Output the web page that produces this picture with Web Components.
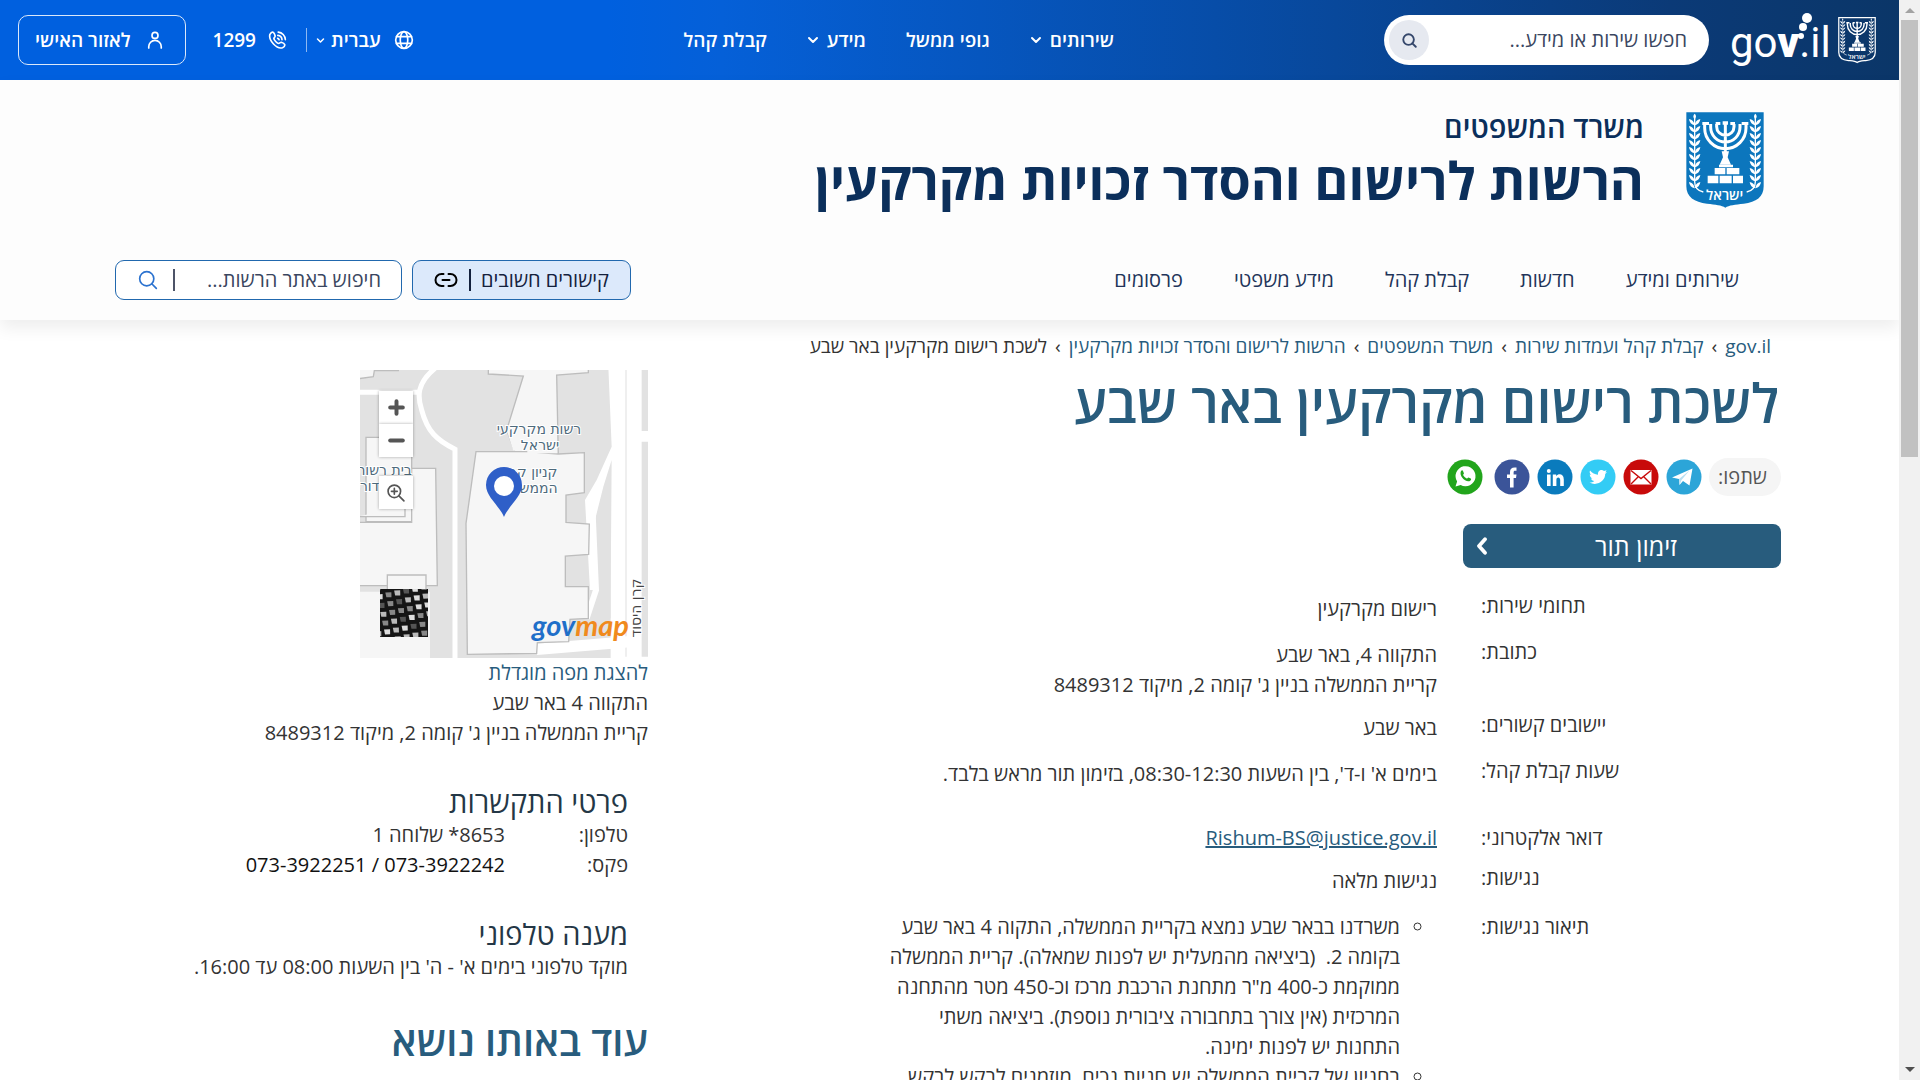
<!DOCTYPE html>
<html lang="he" dir="rtl">
<head>
<meta charset="utf-8">
<title>לשכת רישום מקרקעין באר שבע</title>
<style>
  :root {
    --font: "Open Sans", "Liberation Sans", sans-serif;
    --teal: #285c7d;
    --navy: #0b2f5b;
    --text: #333;
    --fs-body: 20px;
  }
  body { margin: 0; background: #fff; color: var(--text); font: 400 var(--fs-body)/30px var(--font); }
</style>
</head>
<body>
<gov-app></gov-app>

<script>
const base = `
  *, *::before, *::after { box-sizing: border-box; }
  :host { display: block; }
  a { color: inherit; text-decoration: none; }
  button, input { font: inherit; color: inherit; background: none; border: 0; padding: 0; margin: 0; outline: 0; }
  h1, h2, h3, p, ul, dl, dd, dt { margin: 0; padding: 0; font-weight: inherit; font-size: inherit; }
  svg { display: block; flex: none; }
`;
function define(name, css, html) {
  customElements.define(name, class extends HTMLElement {
    constructor() {
      super();
      this.attachShadow({ mode: 'open' }).innerHTML = `<style>${base}${css}</style>${html}`;
    }
  });
}

/* line icons, chosen by the name attribute */
const icons = {
  search: '<circle cx="10.500" cy="10.500" r="8.500"/><path d="M16.500 16.500l5.500 5.500"/>',
  user: '<circle cx="12" cy="6.500" r="3.600"/><path d="M4.500 21.500v-1.500a7.500 7.500 0 0 1 15 0v1.500"/>',
  globe: '<circle cx="12" cy="12" r="10"/><ellipse cx="12" cy="12" rx="4.500" ry="10"/><path d="M3 8h18M3 16h18"/>',
  phone: '<path d="M3.500 5.200C4.500 3.500 6 2.200 7.300 2.800c1 .5 2.200 3.200 2.500 4.400.2 1-1.500 2-1.600 3 0 1.600 4 6 5.800 6 1 0 2-1.700 3.100-1.500 1.200.3 3.800 1.800 4.100 2.800.4 1.300-1 3-2.600 3.700C12 23.500 1.500 12.500 3.500 5.200z"/><path d="M13 6.500a5.500 5.500 0 0 1 5 5M13.500 2.500a9.500 9.500 0 0 1 8.500 9M12.800 10a2.500 2.500 0 0 1 1.700 1.700"/>',
  chevron: '<path d="M4 8l8 8 8-8"/>',
  back: '<path d="M16 3l-8 9 8 9"/>',
  link: '<path d="M9.500 6H7.500a6 6 0 0 0 0 12h2M14.500 6h2a6 6 0 0 1 0 12h-2M8.500 12h7"/>',
  plus: '<path d="M12 4v16M4 12h16"/>',
  minus: '<path d="M4 12h16"/>',
  zoom: '<circle cx="10" cy="10" r="7.500"/><path d="M15.500 15.500l6 6M10 6.500v7M6.500 10h7"/>'
};
customElements.define('gov-icon', class extends HTMLElement {
  constructor() { super(); this.attachShadow({ mode: 'open' }); }
  connectedCallback() {
    this.shadowRoot.innerHTML = `<style>:host{display:block;flex:none;width:20px;height:20px}svg{display:block;width:100%;height:100%;fill:none;stroke:currentColor;stroke-linecap:round;stroke-linejoin:round}</style>
      <svg viewBox="0 0 24 24" stroke-width="${this.getAttribute('weight') || 2}" aria-hidden="true">${icons[this.getAttribute('name')]}</svg>`;
  }
});

/* state emblem: menorah between two olive branches */
const leaves = (x, s) => {
  let d = '';
  for (let y = 88; y < 290; y += 21) {
    d += `<path d="M${x} ${y + 18}q${-15 * s} -3 ${-17 * s} -19q${15 * s} 3 ${17 * s} 19zM${x} ${y + 18}q${15 * s} -3 ${17 * s} -19q${-15 * s} 3 ${-17 * s} 19z"/>`;
  }
  return d + `<path d="M${x} 88q-8 -9 0 -17q8 8 0 17z"/><path d="M${x} 85V275Q${x} 300 ${x + 26 * s} 306" fill="none" stroke="currentColor" stroke-width="4"/>`;
};
const menorah = `
  <g fill="none" stroke="currentColor" stroke-width="9">
    <path d="M973 102v12a62 62 0 0 0 124 0v-12M991 102v10a44 44 0 0 0 88 0v-10M1009 102v8a26 26 0 0 0 52 0v-8M1035 102v98"/>
  </g>
  <path d="M966 96h20v9h-20zM1006 96h14v9h-14zM1050 96h14v9h-14zM1084 96h20v9h-20zM1027 94h16v10h-16z"/>
  <path d="M1024 184h22l-4 18 10 22h-34l10-22z"/>
  <path d="M1016 224h42v8h-42zM1003 234h32v19h-32zM1039 234h38v19h-38zM982 257h32v23h-32zM1018 257h36v23h-36zM1058 257h30v23h-30z"/>`;
customElements.define('state-emblem', class extends HTMLElement {
  constructor() { super(); this.attachShadow({ mode: 'open' }); }
  connectedCallback() {
    const line = this.hasAttribute('outline');
    this.shadowRoot.innerHTML = `<style>:host{display:block;flex:none;width:78px;height:96px;color:#fff}:host([outline]){width:38px;height:48px}svg{display:block;width:100%;height:100%}text{font:600 42px "Open Sans",sans-serif}</style>
    <svg viewBox="${line ? '913 62 242 296' : '917 66 234 288'}" role="img" aria-label="סמל המדינה" fill="currentColor">
      <path d="M918 67h232v222c0 32-22 48-60 52-26 3-44 4-55 12-11-8-29-9-55-12-38-4-62-20-62-52z" ${line ? 'fill="none" stroke="currentColor" stroke-width="8"' : 'fill="#0c76bd"'}/>
      ${menorah}${leaves(943, 1)}${leaves(1125, -1)}
      <text x="1033" y="329" text-anchor="middle">ישראל</text>
    </svg>`;
  }
});

define('gov-logo', `
  a { display: flex; align-items: center; gap: 6px; color: #fff; }
  text { font: 400 42px Roboto, sans-serif; fill: #fff; }
`, `<a href="#" aria-label="gov.il">
  <state-emblem outline></state-emblem>
  <svg width="102" height="60" viewBox="0 0 102 60" direction="ltr">
    <text x="0" y="47">go<tspan font-weight="900">v</tspan>.il</text>
    <circle cx="71" cy="26" r="3" fill="#fff"/><circle cx="73" cy="17" r="4" fill="#fff"/><circle cx="77" cy="8" r="5" fill="#fff"/>
  </svg></a>`);

define('gov-header', `
  header { display: flex; justify-content: space-between; align-items: center; height: 80px; padding-inline: 23px 18px;
    color: #fff; font-weight: 600; font-size: 19px; background: linear-gradient(to left, #0b3668 0, #0b3a77 12%, #074da8 36%, #0560d8 62%, #0060df 68%); }
  .side, nav, form, .item { display: flex; align-items: center; }
  .start { gap: 21px; }
  form { width: 325px; height: 50px; background: #fff; border-radius: 25px; padding-inline: 22px 5px; color: #333; font-weight: 400; font-size: var(--fs-body); }
  input { flex: 1; min-width: 0; height: 30px; }
  input::placeholder { color: #3a4660; opacity: 1; }
  form button { width: 40px; height: 40px; border-radius: 50%; background: #e6e9f0; display: grid; place-items: center; color: #35476b; }
  form gov-icon { width: 15px; height: 15px; }
  nav { gap: 40px; }
  .item { gap: 8px; }
  .item gov-icon.chev { width: 12px; height: 12px; }
  .lang { gap: 13px; }
  .lang .item { gap: 6px; }
  .lang .item gov-icon.chev { width: 9px; height: 9px; }
  .bar { width: 1px; height: 24px; background: #8db8f2; margin-inline: 9px 19px; }
  .tel { gap: 11px; margin-inline-end: 27px; }
  .area { display: flex; align-items: center; gap: 14px; height: 50px; padding-inline: 20px 16px; border: 1px solid #dbe8fa; border-radius: 10px; }
`, `<header>
  <div class="side start"><gov-logo></gov-logo>
    <form><input type="search" aria-label="חיפוש" placeholder="חפשו שירות או מידע..."><button type="button" aria-label="חפש"><gov-icon name="search" weight="3"></gov-icon></button></form></div>
  <nav>
    <a class="item" href="#">שירותים<gov-icon class="chev" name="chevron" weight="4"></gov-icon></a>
    <a class="item" href="#">גופי ממשל</a>
    <a class="item" href="#">מידע<gov-icon class="chev" name="chevron" weight="4"></gov-icon></a>
    <a class="item" href="#">קבלת קהל</a>
  </nav>
  <div class="side">
    <button class="item lang" type="button"><gov-icon name="globe"></gov-icon><span class="item">עברית<gov-icon class="chev" name="chevron" weight="4"></gov-icon></span></button>
    <span class="bar"></span>
    <a class="item tel" href="#"><gov-icon name="phone"></gov-icon>1299</a>
    <button class="area" type="button"><gov-icon name="user"></gov-icon>לאזור האישי</button>
  </div></header>`);

define('office-header', `
  :host { position: relative; background: #fdfdfd; box-shadow: 0 8px 16px #00000012; }
  .brand { display: flex; gap: 42px; padding: 32px 135px 0; height: 156px; color: var(--navy); }
  h2 { font-size: 29px; line-height: 30px; font-weight: 600; }
  h1 { font-size: 52px; line-height: 76px; font-weight: 700; }
  .row { display: flex; align-items: flex-start; justify-content: space-between; height: 84px; padding: 24px 160px 0 115px; color: #223459; }
  nav, .tools, .box { display: flex; align-items: center; }
  nav { gap: 51px; height: 40px; }
  .tools { gap: 10px; }
  .box { height: 40px; border: 1px solid #2168ae; border-radius: 9px; }
  .links { width: 219px; padding-inline: 21px; justify-content: space-between; background: #dce9fb; color: #14213d; }
  .find { width: 287px; padding-inline: 20px 22px; background: #fff; }
  input { flex: 1; min-width: 0; height: 30px; }
  input::placeholder { color: #3a4660; opacity: 1; }
  i { width: 2px; height: 22px; background: #14213d; }
  .find i { margin-inline-end: 15px; background: #4d5468; }
  .find button { color: #2b72cf; }
  .links gov-icon { width: 24px; height: 24px; color: #000; }
`, `<div class="brand"><state-emblem></state-emblem><div><h2>משרד המשפטים</h2><h1>הרשות לרישום והסדר זכויות מקרקעין</h1></div></div>
  <div class="row">
    <nav><a href="#">שירותים ומידע</a><a href="#">חדשות</a><a href="#">קבלת קהל</a><a href="#">מידע משפטי</a><a href="#">פרסומים</a></nav>
    <div class="tools">
      <button class="box links" type="button">קישורים חשובים<i></i><gov-icon name="link" weight="2"></gov-icon></button>
      <form class="box find"><input type="search" aria-label="חיפוש באתר" placeholder="חיפוש באתר הרשות..."><i></i><button type="button" aria-label="חפש"><gov-icon name="search" weight="2"></gov-icon></button></form>
    </div></div>`);

define('bread-crumbs', `
  nav { display: flex; align-items: center; height: 50px; padding-top: 1px; padding-inline-start: 128px; font-size: 19px; color: var(--teal); gap: 8px; white-space: nowrap; }
  b { font-weight: 400; color: #333; }
`, `<nav><a href="#">gov.il</a><b>›</b><a href="#">קבלת קהל ועמדות שירות</a><b>›</b><a href="#">משרד המשפטים</a><b>›</b><a href="#">הרשות לרישום והסדר זכויות מקרקעין</a><b>›</b><b>לשכת רישום מקרקעין באר שבע</b></nav>`);

define('share-bar', `
  div { display: flex; align-items: center; gap: 7px; height: 38px; }
  span { background: #f5f5f5; border-radius: 19px; line-height: 38px; padding-inline: 14px 9px; color: #555; }
  a:last-child { margin-inline-start: 4px; }
`, `<div><span>שתפו:</span>
  <a href="#" aria-label="Telegram"><svg width="36" height="36" viewBox="0 0 36 36"><circle cx="18" cy="18" r="17.500" fill="#2ca5d8"/><path d="M6 18.500L26.500 9.500 23.500 26.500 17 22l-3.500 4-.5-6z" fill="#fff"/><path d="M13 20l10.500-8.500L15.500 21l-2 5z" fill="#b8dff2"/></svg></a>
  <a href="#" aria-label="Email"><svg width="36" height="36" viewBox="0 0 36 36"><circle cx="18" cy="18" r="17.500" fill="#c80a0a"/><path d="M7.500 11h21v14.500h-21z" fill="#fff"/><path d="M8 11.500l10 8 10-8M8 25l7.500-7.500M28 25l-7.500-7.500" fill="none" stroke="#c80a0a" stroke-width="1.400"/></svg></a>
  <a href="#" aria-label="Twitter"><svg width="36" height="36" viewBox="0 0 36 36"><circle cx="18" cy="18" r="17.500" fill="#33ccf5"/><path d="M10 11.500c2.300 2.800 4.800 4 8 4.200-.6-3.500 3.300-6.200 6-3.600l2.600-.9-1.300 2.300 1.700-.4-1.800 2c.2 6.500-7.700 12.500-15.700 8.500 2 0 3.600-.5 4.800-1.500-1.800-.3-2.800-1.200-3.300-2.600h1.500c-1.900-.9-2.700-2.200-2.700-4l1.500.4c-1.600-1.300-2-2.700-1.300-4.400z" fill="#fff"/></svg></a>
  <a href="#" aria-label="LinkedIn"><svg width="36" height="36" viewBox="0 0 36 36"><circle cx="18" cy="18" r="17.500" fill="#0a7bbd"/><path d="M10 15.500h3.600V27H10zM15.800 15.500h3.400v1.700c2.200-3.200 7.600-2.400 7.600 3.200V27h-3.600v-6c0-3.500-3.800-3.300-3.800-.2V27h-3.600z" fill="#fff"/><circle cx="11.800" cy="12" r="2" fill="#fff"/></svg></a>
  <a href="#" aria-label="Facebook"><svg width="36" height="36" viewBox="0 0 36 36"><circle cx="18" cy="18" r="17.500" fill="#3b5499"/><path d="M16 28.500V19h-3v-3.500h3V13c0-3.500 2-5 6.500-4.400v3.200c-2.200-.2-2.900.1-2.900 1.600v2.100h2.900L22 19h-2.400v9.500z" fill="#fff"/></svg></a>
  <a href="#" aria-label="WhatsApp"><svg width="36" height="36" viewBox="0 0 36 36"><circle cx="18" cy="18" r="17.500" fill="#22a51c"/><path d="M8.500 27.500l1.600-5a10 10 0 1 1 3.600 3.400z" fill="#fff"/><path d="M14 12c1-1 1.700-.8 2.100.2l.8 2c.2.700-1 1.400-.8 1.900.8 1.600 2 2.700 3.600 3.400.6.200 1.300-1.300 1.900-1.100l2.100 1c.8.400.3 1.800-.7 2.500-3.800 2.400-11.500-5-9-9.900z" fill="#22a51c"/></svg></a></div>`);

/* one labelled line of the office card; the gap attribute sets the space under it */
define('detail-row', `
  :host { display: grid; grid-template-columns: 300px minmax(0, 1fr); column-gap: 44px; padding-bottom: 16px; }
  :host([gap=s]) { padding-bottom: 13px; }
  :host([gap=l]) { padding-bottom: 34px; }
  .label { text-align: end; line-height: 24px; }
  :host([level]) .label { line-height: 30px; }
`, `<div class="label"><slot name="label"></slot></div><div><slot></slot></div>`);

define('office-details', `
  :host { padding-bottom: 30px; }
  h1 { color: var(--teal); font-size: 54px; font-weight: 600; line-height: 60px; margin: 2px 0 26px; padding-inline-start: 2px; white-space: nowrap; }
  .book { display: flex; align-items: center; width: 318px; height: 44px; margin: 28px 0 26px; padding-inline-end: 10px; border-radius: 8px; background: var(--teal); color: #fff; font-size: 25px; }
  .book span { flex: 1; text-align: center; }
  .book gov-icon { width: 18px; height: 18px; }
  .mail { color: var(--teal); text-decoration: underline; }
  ul { list-style: circle; padding-inline-start: 37px; }
`, `<h1>לשכת רישום מקרקעין באר שבע</h1>
  <share-bar></share-bar>
  <button class="book" type="button"><span>זימון תור</span><gov-icon name="back" weight="5"></gov-icon></button>
  <detail-row><span slot="label">תחומי שירות:</span>רישום מקרקעין</detail-row>
  <detail-row gap="s"><span slot="label">כתובת:</span>התקווה 4, באר שבע<br>קריית הממשלה בניין ג' קומה 2, מיקוד 8489312</detail-row>
  <detail-row><span slot="label">יישובים קשורים:</span>באר שבע</detail-row>
  <detail-row gap="l"><span slot="label">שעות קבלת קהל:</span>בימים א' ו-ד', בין השעות 08:30-12:30, בזימון תור מראש בלבד.</detail-row>
  <detail-row gap="s" level><span slot="label">דואר אלקטרוני:</span><a class="mail" href="mailto:Rishum-BS@justice.gov.il">Rishum-BS@justice.gov.il</a></detail-row>
  <detail-row><span slot="label">נגישות:</span>נגישות מלאה</detail-row>
  <detail-row level><span slot="label">תיאור נגישות:</span><ul>
    <li>משרדנו בבאר שבע נמצא בקריית הממשלה, התקוה 4 באר שבע<br>בקומה 2.&nbsp; (ביציאה מהמעלית יש לפנות שמאלה). קריית הממשלה<br>ממוקמת כ-400 מ"ר מתחנת הרכבת מרכז וכ-450 מטר מהתחנה<br>המרכזית (אין צורך בתחבורה ציבורית נוספת). ביציאה משתי<br>התחנות יש לפנות ימינה.</li>
    <li>בחניון של קריית הממשלה יש חניות נכים, מוזמנים לבקש לבקש</li></ul></detail-row>`);

/* aerial thumbnail: rows of small roofs between dark streets */
let roofs = '';
for (let r = -1; r < 7; r++) for (let c = -1; c < 7; c++)
  roofs += `<path d="M${c * 9 + 1} ${r * 9}l6 1-1 5-5 -1z" fill="${['#ddd', '#888', '#bbb', '#555'][Math.abs(r * 3 + c * 5 + (r * c) % 3) % 4]}"/>`;
define('gov-map', `
  :host { position: relative; width: 288px; height: 288px; overflow: hidden; }
  .poi { font: 400 14px "DejaVu Sans", sans-serif; fill: #4e6a7c; text-anchor: middle; paint-order: stroke; stroke: #fff; stroke-width: 2px; }
  .street { fill: #444; }
  .logo { font: italic 700 29px Lato, sans-serif; }
  .ctl { position: absolute; left: 19px; top: 21px; display: flex; flex-direction: column; }
  button { width: 34px; height: 33px; display: grid; place-items: center; background: #fff; color: #555; box-shadow: 0 0 3px #0005; }
  .zoom { margin-top: 19px; }
  .zoom gov-icon { width: 20px; height: 20px; }
  .plus { width: 19px; height: 19px; }
`, `<svg width="288" height="288" viewBox="0 0 288 288" direction="ltr">
  <rect width="288" height="288" fill="#e2e2e2"/>
  <g transform="translate(-20 -10) scale(.33333)">
    <path d="M805 20h120v880H812V690L815 300 790 380 765 480 762 690 750 690 735 420 770 360 815 260z" fill="#fff"/>
    <path d="M858 30v860" stroke="#efefef" stroke-width="6"/>
    <path d="M905 30h20v183h-20zM905 245h20v645h-20z" fill="#e2e2e2"/>
    <path d="M775 700V480L812 380V775H775z" fill="#e2e2e2"/>
    <path d="M590 868L870 845" stroke="#fff" stroke-width="34"/>
    <path d="M740 775L768 690 758 460" fill="none" stroke="#fff" stroke-width="18"/>
    <path d="M285 25C230 70 232 110 245 150C262 215 290 240 345 268V895M55 97H238" fill="none" stroke="#fff" stroke-width="15"/>
    <g fill="#f6f6f6" stroke="#bdbdbd" stroke-width="4">
      <path d="M445 20V42L550 48 500 210 530 290H655L650 45 745 38V20z"/>
      <path d="M408 275H560L655 282 733 278V398L678 405V487L748 492 746 583 676 588V680H745V775L690 778 686 845 592 848 590 880 382 883 378 490z"/>
      <path d="M50 57L100 50 103 32H175V10H50z"/>
      <path d="M78 232H215V485H78z"/><path d="M50 487H215V325H287L292 677H50z"/>
      <path d="M50 470H195V440"/><path d="M50 695H270V900H50z" stroke="none"/><path d="M142 645H258V692H142z"/>
    </g>
    <path d="M500 210H650V280H562V272H520z" fill="#f6f6f6"/>
  </g>
  <text class="poi" x="179" y="64">רשות מקרקעי</text><text class="poi" x="180" y="80">ישראל</text>
  <text class="poi" x="167" y="107">קניון קרית</text><text class="poi" x="170" y="123">הממשלה</text>
  <text class="poi" x="24" y="105">בית רשות</text><text class="poi" x="8" y="121">דורי</text>
  <text class="poi street" transform="translate(281 238) rotate(-90)">קרן היסוד</text>
  <path d="M144 147C139 135 126 127 126 115a18 18 0 0 1 36 0c0 12-13 20-18 32z" fill="#2f5fc8"/><circle cx="144" cy="116" r="10" fill="#fff"/>
  <g transform="translate(20 219)"><svg width="48" height="48"><rect width="48" height="48" fill="#151515"/><g transform="rotate(-12 24 24)">${roofs}</g></svg></g>
  <text class="logo" x="172" y="266" fill="#1f6fc9">gov<tspan fill="#f08a1d">map</tspan></text>
</svg>
<div class="ctl"><button type="button" aria-label="הגדל"><gov-icon class="plus" name="plus" weight="5"></gov-icon></button><button type="button" aria-label="הקטן"><gov-icon class="plus" name="minus" weight="5"></gov-icon></button><button class="zoom" type="button" aria-label="התמקד"><gov-icon name="zoom" weight="2"></gov-icon></button></div>`);

define('contact-panel', `
  .link { color: var(--teal); }
  section { margin-top: 36px; padding-inline-start: 20px; }
  h3 { font-size: 29px; line-height: 36px; color: #243746; }
  dl { display: grid; grid-template-columns: 123px 1fr; color: var(--text); }
  .num { color: #111; }
  h2 { font-size: 40px; line-height: 48px; font-weight: 600; color: var(--teal); margin-top: 35px; }
`, `<gov-map></gov-map>
  <p><a class="link" href="#">להצגת מפה מוגדלת</a></p><p>התקווה 4 באר שבע</p><p>קריית הממשלה בניין ג' קומה 2, מיקוד 8489312</p>
  <section><h3>פרטי התקשרות</h3><dl><dt>טלפון:</dt><dd>8653* שלוחה 1</dd><dt>פקס:</dt><dd class="num">073-3922242 / 073-3922251</dd></dl></section>
  <section><h3>מענה טלפוני</h3><p>מוקד טלפוני בימים א' - ה' בין השעות 08:00 עד 16:00.</p></section>
  <h2>עוד באותו נושא</h2>`);

define('side-scroll', `
  :host { display: flex; flex-direction: column; width: 21px; padding: 0 2px; background: #f1f1f1; align-items: stretch; }
  .btn { height: 20px; display: grid; place-items: center; color: #a3a3a3; }
  .btn.down { color: #505050; }
  .track { flex: 1; }
  .thumb { height: 42%; background: #c1c1c1; }
`, `<div class="btn"><svg width="10" height="6" viewBox="0 0 10 6" fill="currentColor"><path d="M0 6l5-5 5 5z"/></svg></div><div class="track"><div class="thumb"></div></div><div class="btn down"><svg width="10" height="6" viewBox="0 0 10 6" fill="currentColor"><path d="M0 0l5 5 5-5z"/></svg></div>`);

define('gov-app', `
  :host { display: flex; height: 100vh; overflow: hidden; }
  side-scroll { flex: none; display: flex; }
  .page { flex: 1; min-width: 0; overflow: hidden; }
  main { display: grid; grid-template-columns: minmax(0, 1fr) 530px; padding-inline: 118px; }
`, `<side-scroll></side-scroll><div class="page"><gov-header></gov-header><office-header></office-header><bread-crumbs></bread-crumbs>
  <main><office-details></office-details><contact-panel></contact-panel></main></div>`);
</script>
</body>
</html>
